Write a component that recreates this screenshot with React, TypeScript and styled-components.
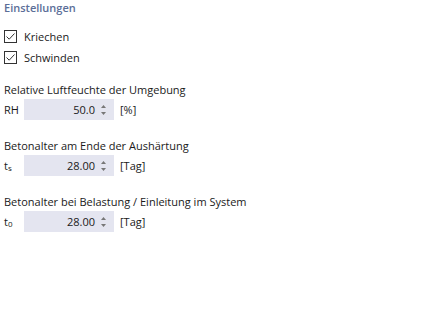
import React from 'react'
import styled, { createGlobalStyle } from 'styled-components'

const GlobalStyle = createGlobalStyle`
  body {
    margin: 0;
    background: #ffffff;
    font-family: 'Open Sans', 'Noto Sans', sans-serif;
    font-size: 11px;
    color: #1a1a1a;
  }
`

const Panel = styled.div`
  width: 425px;
  height: 316px;
  padding: 0 0 0 4px;
  box-sizing: border-box;
  display: flex;
  flex-direction: column;
`

const Heading = styled.div`
  color: #5b6e98;
  font-weight: 600;
  font-size: 11px;
  height: 16px;
  line-height: 16px;
  margin-bottom: 10px;
`

const CheckRow = styled.label`
  display: flex;
  align-items: center;
  gap: 7px;
  height: 21px;
`

const Box = styled.span`
  width: 11px;
  height: 11px;
  border: 1px solid #333;
  display: flex;
  align-items: center;
  justify-content: center;
`

const Section = styled.div<{ $top: number }>`
  display: flex;
  flex-direction: column;
  margin-top: ${(p) => p.$top}px;
`

const Title = styled.div`
  height: 16px;
  line-height: 16px;
  margin-bottom: 1px;
`

const FieldRow = styled.div`
  display: flex;
  align-items: center;
  height: 21px;
`

const Symbol = styled.div`
  width: 20px;
  sub {
    font-size: 8px;
    vertical-align: -1px;
  }
`

const Input = styled.div`
  width: 90px;
  height: 21px;
  background: #e4e5f0;
  display: flex;
  align-items: center;
  justify-content: flex-end;
  padding-right: 8px;
  box-sizing: border-box;
  gap: 6px;
`

const Spin = styled.div`
  display: flex;
  flex-direction: column;
  align-items: center;
  gap: 4px;
`

const Unit = styled.div`
  margin-left: 6px;
`

const Check = () => (
  <Box>
    <svg width="11" height="11" viewBox="0 0 11 11">
      <path d="M1.5 5.5 L4.2 8.2 L9.5 2.5" fill="none" stroke="#333" strokeWidth="1" />
    </svg>
  </Box>
)

const Spinner = () => (
  <Spin>
    <svg width="5" height="3" viewBox="0 0 5 3"><path d="M0 3 L2.5 0 L5 3Z" fill="#777" /></svg>
    <svg width="5" height="3" viewBox="0 0 5 3"><path d="M0 0 L2.5 3 L5 0Z" fill="#777" /></svg>
  </Spin>
)

const fields = [
  { title: 'Relative Luftfeuchte der Umgebung', sym: 'RH', sub: '', value: '50.0', unit: '[%]', top: 14 },
  { title: 'Betonalter am Ende der Aushärtung', sym: 't', sub: 's', value: '28.00', unit: '[Tag]', top: 18 },
  { title: 'Betonalter bei Belastung / Einleitung im System', sym: 't', sub: '0', value: '28.00', unit: '[Tag]', top: 18 },
]

const App: React.FC = () => (
  <Panel>
    <GlobalStyle />
    <Heading>Einstellungen</Heading>
    <CheckRow><Check />Kriechen</CheckRow>
    <CheckRow><Check />Schwinden</CheckRow>
    {fields.map((f) => (
      <Section key={f.title} $top={f.top}>
        <Title>{f.title}</Title>
        <FieldRow>
          <Symbol>{f.sym}{f.sub && <sub>{f.sub}</sub>}</Symbol>
          <Input>
            {f.value}
            <Spinner />
          </Input>
          <Unit>{f.unit}</Unit>
        </FieldRow>
      </Section>
    ))}
  </Panel>
)

export default App
